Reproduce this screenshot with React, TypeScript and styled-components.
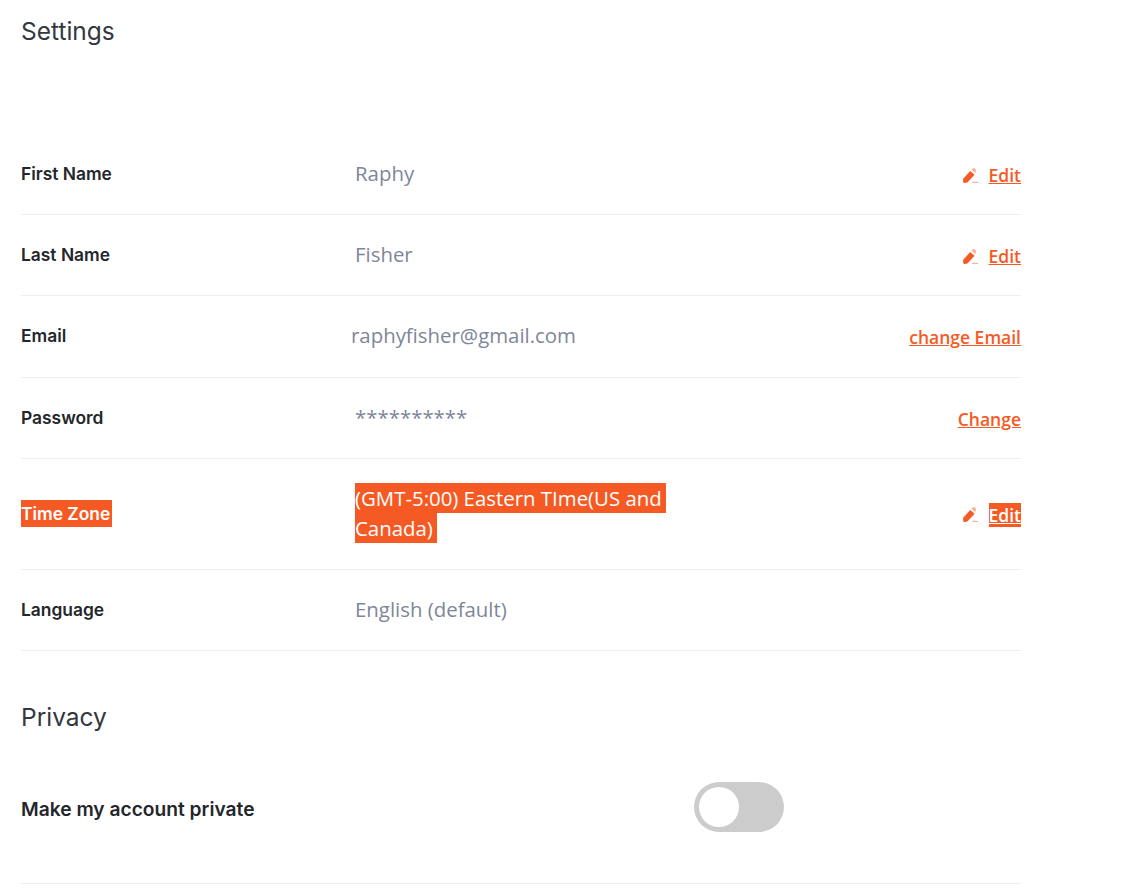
import styled, { createGlobalStyle } from 'styled-components';

const ORANGE = '#F65A24';

const GlobalStyle = createGlobalStyle`
  html, body {
    margin: 0;
    padding: 0;
    background: #ffffff;
  }
`;

const Page = styled.div`
  width: 1000px;
  height: 890px;
  overflow: hidden;
  padding: 16px 0 0 21px;
`;

const Heading = styled.h2`
  margin: 0;
  font-family: 'Inter', sans-serif;
  font-weight: 400;
  font-size: 24.5px;
  line-height: 30px;
  color: #333840;
`;

const Rows = styled.div`
  margin-top: 88px;
`;

const Row = styled.div<{ $tall?: boolean }>`
  display: grid;
  grid-template-columns: 334px 315px 1fr;
  align-items: center;
  height: ${(p) => (p.$tall ? 110.2 : 80.2)}px;
  border-bottom: 1px solid #edf0f3;
`;

const Label = styled.div`
  font-family: 'Inter', sans-serif;
  font-weight: 600;
  font-size: 17.4px;
  color: #23262b;
  padding-bottom: 1px;
`;

const Value = styled.div<{ $shift?: number }>`
  font-family: 'Open Sans', sans-serif;
  font-size: 20.4px;
  line-height: 30px;
  color: #7e8699;
  margin-left: ${(p) => p.$shift ?? 0}px;
  padding-bottom: 2px;
`;

const SelectedValue = styled.span`
  background: ${ORANGE};
  color: #ffffff;
  padding: 1px 4px 1px 0;
  -webkit-box-decoration-break: clone;
  box-decoration-break: clone;
`;

const SelectedLabel = styled.span`
  background: ${ORANGE};
  color: #ffffff;
  padding: 3px 2px 3px 0;
`;

const Action = styled.div`
  display: flex;
  align-items: center;
  justify-content: flex-end;
  gap: 10px;
  padding-top: 2px;
`;

const ActionLink = styled.a`
  font-family: 'Open Sans', sans-serif;
  font-weight: 600;
  font-size: 17.5px;
  color: ${ORANGE};
  text-decoration: underline;
`;

const SelectedLink = styled(ActionLink)`
  background: ${ORANGE};
  color: #ffffff;
`;

const PrivacyHeading = styled(Heading)`
  margin-top: 51px;
`;

const PrivacyRow = styled.div`
  display: flex;
  align-items: center;
  height: 150px;
  margin-top: 1px;
  border-bottom: 1px solid #edf0f3;
`;

const PrivacyLabel = styled(Label)`
  width: 673px;
  font-size: 19.2px;
  padding: 2px 0 0;
`;

const Toggle = styled.div`
  width: 90px;
  height: 50px;
  border-radius: 25px;
  background: #cccccc;
  display: flex;
  align-items: center;
  padding-left: 5px;
  box-sizing: border-box;
  margin-bottom: 2px;
`;

const Knob = styled.div`
  width: 40px;
  height: 40px;
  border-radius: 50%;
  background: #ffffff;
`;

const PencilIcon = () => (
  <svg width="17" height="17" viewBox="0 0 17 17">
    <path d="M1.4 11.6 L8.2 4 L12.6 7.8 L5.6 15.2 Q3.4 16.4 1.6 15.8 Q0.8 13.6 1.4 11.6 Z" fill={ORANGE} />
    <path d="M9.4 2.8 L10.8 1.4 Q11.9 0.7 13 1.6 L13.9 2.5 Q14.6 3.6 13.8 4.7 L13.2 6 Z" fill="#F9B49C" />
    <rect x="10" y="14.8" width="6" height="1.2" fill="#F9B49C" />
  </svg>
);

const EditAction = ({ selected }: { selected?: boolean }) => (
  <Action>
    <PencilIcon />
    {selected ? <SelectedLink>Edit</SelectedLink> : <ActionLink>Edit</ActionLink>}
  </Action>
);

export default function App() {
  return (
    <Page>
      <GlobalStyle />
      <Heading>Settings</Heading>
      <Rows>
        <Row>
          <Label>First Name</Label>
          <Value>Raphy</Value>
          <EditAction />
        </Row>
        <Row>
          <Label>Last Name</Label>
          <Value>Fisher</Value>
          <EditAction />
        </Row>
        <Row>
          <Label>Email</Label>
          <Value $shift={-4}>raphyfisher@gmail.com</Value>
          <Action>
            <ActionLink>change Email</ActionLink>
          </Action>
        </Row>
        <Row>
          <Label>Password</Label>
          <Value>**********</Value>
          <Action>
            <ActionLink>Change</ActionLink>
          </Action>
        </Row>
        <Row $tall>
          <Label>
            <SelectedLabel>Time Zone</SelectedLabel>
          </Label>
          <Value>
            <SelectedValue>(GMT-5:00) Eastern TIme(US and Canada)</SelectedValue>
          </Value>
          <EditAction selected />
        </Row>
        <Row>
          <Label>Language</Label>
          <Value>English (default)</Value>
        </Row>
      </Rows>
      <PrivacyHeading>Privacy</PrivacyHeading>
      <PrivacyRow>
        <PrivacyLabel>Make my account private</PrivacyLabel>
        <Toggle>
          <Knob />
        </Toggle>
      </PrivacyRow>
    </Page>
  );
}
